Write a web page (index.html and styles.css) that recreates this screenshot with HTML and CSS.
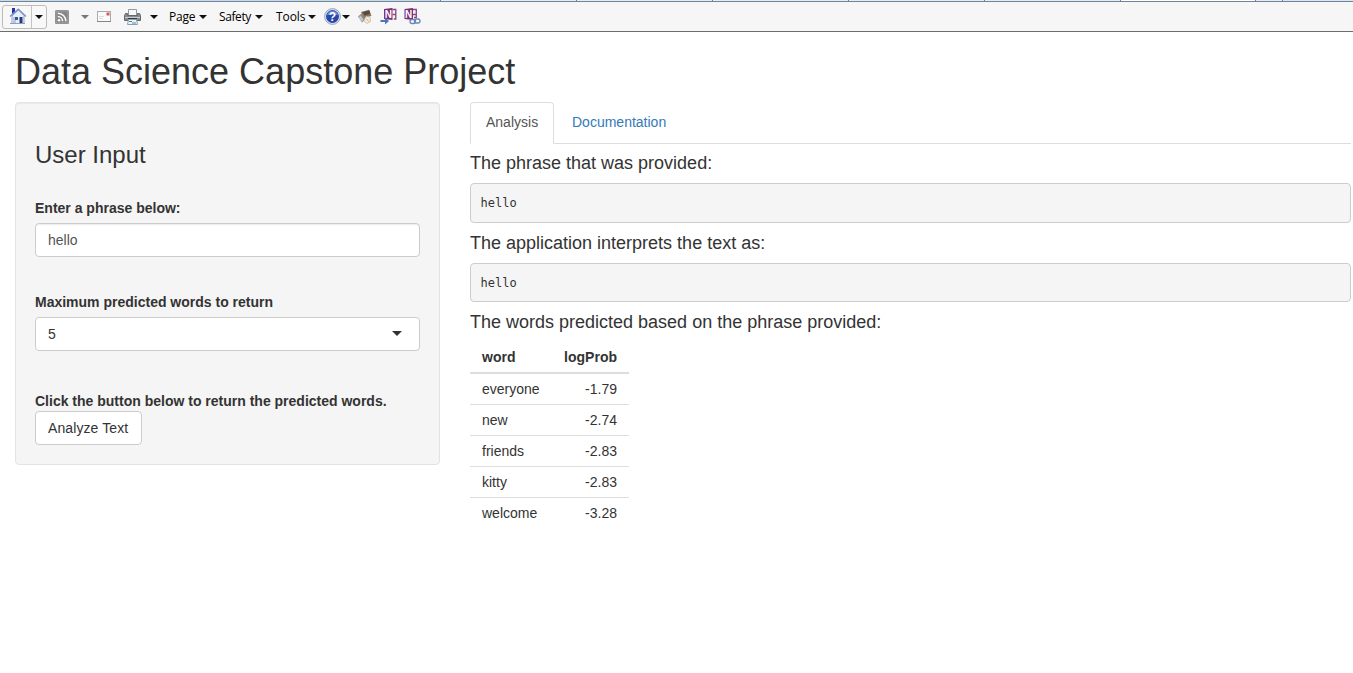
FILE: index.html
```
<!DOCTYPE html>
<html lang="en">
<head>
<meta charset="utf-8">
<title>Data Science Capstone Project</title>
<link rel="stylesheet" href="styles.css">
</head>
<body>
<div class="tabstrip"><i class="t-first"></i><i></i><i></i><i></i><i></i><i></i><i class="t-active"></i><i class="t-new"></i></div>
<header class="toolbar">
  <div class="home">
    <span class="home-main"><svg width="18" height="18" viewBox="0 0 18 18"><path d="M3 9v7.500h12V8.500L9.500 3z" fill="#e9eefb" stroke="#7f8fb8" stroke-width=".8"/><path d="M3 1h3v4L3 7z" fill="#2733a8"/><path d="M1 9.500 9.300 2.200 17 9.500" fill="none" stroke="#7b91c6" stroke-width="1.500"/><path d="M4 10h3v6H4z" fill="#b9c5e2"/><path d="M6 10h3v3H6z" fill="#3a568f"/><path d="M10.500 10h3v6h-3z" fill="#233b80"/><path d="M1 16.500h15" stroke="#8d9dbc"/></svg></span>
    <span class="home-drop"><b class="arrow"></b></span>
  </div>
  <svg class="rss" width="14" height="14" viewBox="0 0 14 14"><rect width="14" height="14" rx="1.500" fill="#858585"/><rect x="1" y="1" width="12" height="12" fill="none" stroke="#a4a4a4"/><circle cx="4" cy="10.300" r="1.300" fill="#fff"/><path d="M2.800 6.500a4.800 4.800 0 0 1 4.800 4.800M2.800 3.200a8.100 8.100 0 0 1 8.100 8.100" fill="none" stroke="#fff" stroke-width="1.500"/></svg>
  <b class="arrow arrow-dim"></b>
  <svg class="mail" width="14" height="11" viewBox="0 0 14 11"><rect x=".5" y=".5" width="13" height="10" fill="#fafafa" stroke="#aaa"/><path d="M0 10.500h14" stroke="#858585"/><path d="M2 5.500h5M2 7.500h4" stroke="#ddd"/><path d="M9.500 1.500h3v3h-3z" fill="#d65a62"/></svg>
  <svg class="printer" width="17" height="16" viewBox="0 0 17 16"><path d="M4.500.5h8v6h-8z" fill="#f5f7f9" stroke="#929aa1"/><path d="M1.500 4.500h2v2h10v-2h2l1 2v5H.5v-5z" fill="#858b90" stroke="#62686d"/><path d="M1 8.500h15" stroke="#c9cdd0"/><path d="M4 9h9v2H4z" fill="#34383c"/><path d="M4.500 10.500h8l1 5h-10z" fill="#eef5f8" stroke="#8aa1ac"/><path d="M5 12.500h3M8 14h4" stroke="#4a8ca3"/></svg>
  <b class="arrow"></b>
  <span class="menu menu-page">Page</span><b class="arrow"></b>
  <span class="menu menu-safety">Safety</span><b class="arrow"></b>
  <span class="menu menu-tools">Tools</span><b class="arrow"></b>
  <svg class="help" width="17" height="17" viewBox="0 0 17 17"><circle cx="8.500" cy="8.500" r="7.900" fill="#dce3f0" stroke="#8490aa" stroke-width=".8"/><circle cx="8.500" cy="8.500" r="6.500" fill="#2748aa"/><path d="M3 7a5.700 5.700 0 0 1 11 0z" fill="#6885d2"/><text x="8.500" y="13" text-anchor="middle" class="mark">?</text></svg>
  <b class="arrow"></b>
  <svg class="research" width="16" height="16" viewBox="0 0 16 16"><path d="M4 3 12 .8l2.500 6-7.500 3z" fill="#8b7355"/><path d="M5.500 3.300 12.500 1.500l.8 3-5.500 2z" fill="#524b48"/><path d="M1 7.500 4.500 4.500l4 5.500-3.500 3.500z" fill="#8d8b90"/><path d="M1.500 8.500 3.500 6.500l3 4-1.700 2z" fill="#c6c6cb"/><path d="M9 7.500 13 8l.5 4.500-3.500 2-3-2.500z" fill="#f3eddf" stroke="#c4bba8" stroke-width=".8"/><path d="M9.500 10l2.500 2.500" stroke="#d9a44e"/></svg>
  <svg class="note note-send" width="17" height="17" viewBox="0 0 17 17"><path d="M4 1 12.500 0v12L4 11z" fill="#7b2d78"/><path d="M12.500 1.500h3.300v9.500h-2M12.500 6.500h3" fill="none" stroke="#874784" stroke-width="1.300"/><text x="8.300" y="9.500" text-anchor="middle" class="note-letter">N</text><path d="M.5 13h6" stroke="#4976b5" stroke-width="2"/><path d="M5 9.500 9 13l-4 3.500z" fill="#4976b5"/></svg>
  <svg class="note note-link" width="17" height="17" viewBox="0 0 17 17"><path d="M.5 1 9 0v12L.5 11z" fill="#7b2d78"/><path d="M9 1.500h3.300v8H10M9 6.500h3" fill="none" stroke="#874784" stroke-width="1.300"/><text x="4.700" y="9.500" text-anchor="middle" class="note-letter">N</text><rect x="6" y="11.500" width="5.500" height="4" rx="2" fill="#f6f6f6" stroke="#6689b8" stroke-width="1.300"/><rect x="10.500" y="11" width="5.500" height="4" rx="2" fill="none" stroke="#6689b8" stroke-width="1.300"/></svg>
</header>
<main class="page">
  <h1>Data Science Capstone Project</h1>
  <div class="row">
    <form class="well">
      <h3>User Input</h3>
      <label class="label" for="phrase">Enter a phrase below:</label>
      <input class="field" id="phrase" type="text" value="hello">
      <span class="label">Maximum predicted words to return</span>
      <div class="field select"><span>5</span><b class="caret"></b></div>
      <strong class="hint">Click the button below to return the predicted words.</strong>
      <button class="btn" type="button">Analyze Text</button>
    </form>
    <section class="output">
      <nav class="tabs"><a class="tab active">Analysis</a><a class="tab">Documentation</a></nav>
      <h4>The phrase that was provided:</h4>
      <pre>hello</pre>
      <h4>The application interprets the text as:</h4>
      <pre>hello</pre>
      <h4>The words predicted based on the phrase provided:</h4>
      <table>
        <thead><tr><th>word</th><th class="num">logProb</th></tr></thead>
        <tbody>
          <tr><td>everyone</td><td class="num">-1.79</td></tr>
          <tr><td>new</td><td class="num">-2.74</td></tr>
          <tr><td>friends</td><td class="num">-2.83</td></tr>
          <tr><td>kitty</td><td class="num">-2.83</td></tr>
          <tr><td>welcome</td><td class="num">-3.28</td></tr>
        </tbody>
      </table>
    </section>
  </div>
</main>
</body>
</html>
```
FILE: styles.css
```
* { box-sizing: border-box; }
body {
  margin: 0;
  height: 673px;
  overflow: hidden;
  background: #fff;
  color: #333;
  font: 14px/20px "Liberation Sans", Arial, sans-serif;
}
svg { display: block; flex: none; }

/* Browser chrome */
.tabstrip { display: flex; height: 2px; background: #dce6f0; border-bottom: 1px solid #71839a; }
.tabstrip i { width: 136px; height: 1px; background: #e6eef5; border-right: 1px solid #71839a; }
.tabstrip .t-first { width: 441px; background: #c9dbe9; }
.tabstrip .t-active { width: 135px; background: #fff; }
.tabstrip .t-new { width: 27px; }
.toolbar {
  display: flex;
  align-items: center;
  height: 30px;
  padding-left: 2px;
  background: #f6f6f6;
  border-bottom: 1px solid #6d6d6d;
}
.home {
  display: flex;
  width: 45px;
  height: 24px;
  border: 1px solid #bcbcbc;
  border-radius: 3px;
  background: #f8f8f8;
}
.home-main { width: 29px; padding: 1px 0 0 6px; border-right: 1px solid #c4c4c4; }
.home-drop { flex: 1; display: flex; align-items: center; justify-content: center; }
.arrow {
  flex: none;
  border: solid transparent;
  border-width: 4px 4px 0;
  border-top-color: #111;
}
.arrow-dim { border-top-color: #777; margin: 0 8px 0 12px; }
.rss { margin: 1px 0 0 8px; }
.printer { margin: 0 9px 0 13px; }
.menu {
  height: 20px;
  color: #000;
  font: 12px/20px "Open Sans", "Noto Sans", sans-serif;
  white-space: nowrap;
}
.menu-page { width: 30px; margin-left: 11px; letter-spacing: -.2px; }
.menu-safety { width: 36px; margin-left: 12px; letter-spacing: -.4px; }
.menu-tools { width: 32px; margin-left: 13px; letter-spacing: -.1px; }
.help { margin: 0 1px 0 8px; }
.mark { font: bold 12px "Liberation Sans", sans-serif; fill: #fff; }
.research { margin-left: 7px; }
.note-send { margin-left: 7px; }
.note-link { margin-left: 7px; }
.note-letter { font: bold 10px "Liberation Sans", sans-serif; fill: #fff; }

/* Page */
.page { padding: 20px 2px 0 15px; }
h1, h3, h4 { margin: 0; font-weight: normal; }
h1 { font-size: 36px; line-height: 40px; margin-bottom: 10px; }
.row { display: flex; gap: 30px; align-items: flex-start; }
.well {
  width: 425px;
  padding: 19px;
  background: #f5f5f5;
  border: 1px solid #e3e3e3;
  border-radius: 4px;
  box-shadow: inset 0 1px 1px rgba(0, 0, 0, .05);
}
h3 { font-size: 24px; line-height: 26px; margin: 20px 0 30px; }
.label { display: block; font-weight: bold; margin-bottom: 5px; }
.field {
  display: block;
  width: 100%;
  height: 34px;
  margin-bottom: 35px;
  padding: 6px 12px;
  border: 1px solid #ccc;
  border-radius: 4px;
  background: #fff;
  color: #555;
  font: inherit;
  box-shadow: inset 0 1px 1px rgba(0, 0, 0, .075);
}
.select {
  display: flex;
  justify-content: space-between;
  align-items: center;
  margin-bottom: 40px;
  padding-right: 17px;
  color: #333;
  box-shadow: none;
}
.caret { margin-bottom: 2px; border: 5px solid transparent; border-top-color: #333; border-bottom: 0; }
.hint { display: block; }
.btn {
  display: block;
  width: 107px;
  height: 34px;
  padding: 0 0 0 12px;
  border: 1px solid #ccc;
  border-radius: 4px;
  background: #fff;
  color: #333;
  font: inherit;
  text-align: left;
  letter-spacing: .1px;
}
.output { flex: 1; }
.tabs { display: flex; gap: 2px; height: 42px; border-bottom: 1px solid #ddd; }
.tab {
  height: 42px;
  padding: 9px 15px 11px;
  border: 1px solid transparent;
  border-radius: 4px 4px 0 0;
  color: #337ab7;
}
.tab.active { width: 84px; color: #555; background: #fff; border-color: #ddd; border-bottom-color: #fff; }
h4 { font-size: 18px; line-height: 19.8px; margin: 9.7px 0 9.5px; }
pre {
  margin: 0 0 11px;
  padding: 10px 9.5px 9px;
  border: 1px solid #ccc;
  border-radius: 4px;
  background: #f5f5f5;
  font: 12px/18.57px "DejaVu Sans Mono", monospace;
}
table { width: 159px; margin-top: -10.5px; border-collapse: separate; border-spacing: 0; }
h4 + table { margin-top: -.5px; }
th, td { padding: 5px 12px; text-align: left; }
th { border-bottom: 2px solid #ddd; }
tr + tr td { border-top: 1px solid #ddd; }
.num { text-align: right; padding-left: 0; }
```
